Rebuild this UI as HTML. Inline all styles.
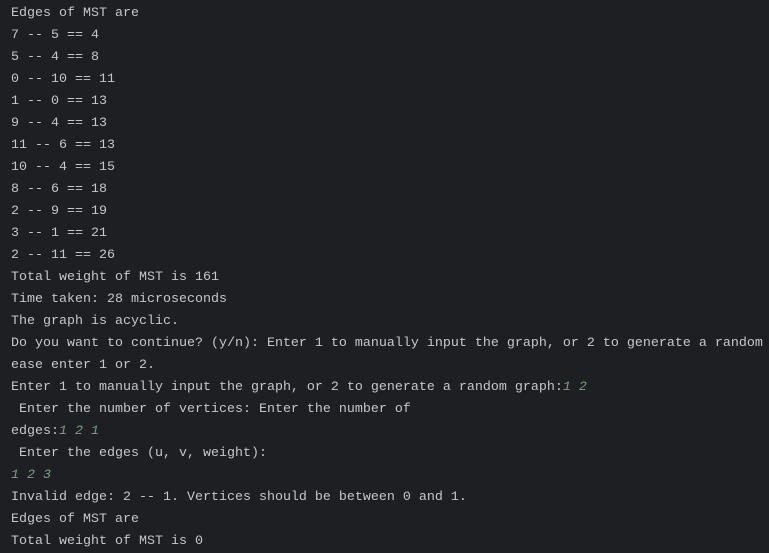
<!DOCTYPE html>
<html><head><style>
html,body{margin:0;padding:0;background:#1e1f22;width:769px;height:551px;overflow:hidden}
pre{margin:0;position:absolute;left:11px;top:3px;font-family:"Liberation Mono",monospace;font-size:13.33px;line-height:22px;color:#c4c6cc;white-space:pre}
i{color:#6aab73}
</style></head><body><pre>Edges of MST are
7 -- 5 == 4
5 -- 4 == 8
0 -- 10 == 11
1 -- 0 == 13
9 -- 4 == 13
11 -- 6 == 13
10 -- 4 == 15
8 -- 6 == 18
2 -- 9 == 19
3 -- 1 == 21
2 -- 11 == 26
Total weight of MST is 161
Time taken: 28 microseconds
The graph is acyclic.
Do you want to continue? (y/n): Enter 1 to manually input the graph, or 2 to generate a random
ease enter 1 or 2.
Enter 1 to manually input the graph, or 2 to generate a random graph:<i>1 2</i>
 Enter the number of vertices: Enter the number of
edges:<i>1 2 1</i>
 Enter the edges (u, v, weight):
<i>1 2 3</i>
Invalid edge: 2 -- 1. Vertices should be between 0 and 1.
Edges of MST are
Total weight of MST is 0</pre></body></html>
